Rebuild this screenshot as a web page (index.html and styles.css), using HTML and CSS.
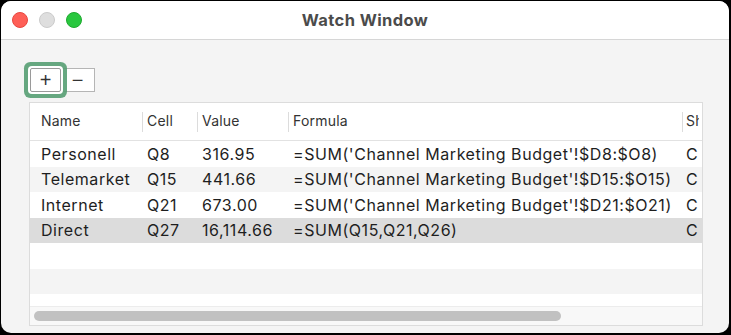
FILE: index.html
```html
<!DOCTYPE html>
<html>
<head>
  <meta charset="utf-8"/>
  <title>Watch Window</title>
  <link rel="stylesheet" href="styles.css">
</head>
<body>
  <div class="window">
    <div class="titlebar">
      <div class="lights">
        <span class="light red"></span>
        <span class="light gray"></span>
        <span class="light green"></span>
      </div>
      <div class="title">Watch Window</div>
    </div>

    <div class="content">
      <div class="tools">
        <button class="tool add focused">+</button>
        <button class="tool remove">&minus;</button>
      </div>

      <!-- watch list -->
      <div class="list">
        <table class="watch">
          <colgroup>
            <col class="c-name"><col class="c-cell"><col class="c-value"><col class="c-formula"><col class="c-sheet">
          </colgroup>
          <thead>
            <tr>
              <th class="first">Name</th>
              <th>Cell</th>
              <th>Value</th>
              <th>Formula</th>
              <th class="sheet"><span class="clip">Sheet</span></th>
            </tr>
          </thead>
          <tbody>
            <tr>
              <td class="first">Personell</td><td>Q8</td><td>316.95</td>
              <td>=SUM('Channel Marketing Budget'!$D8:$O8)</td>
              <td class="sheet"><span class="clip">Channel Marketing Budget</span></td>
            </tr>
            <tr class="alt">
              <td class="first">Telemarket</td><td>Q15</td><td>441.66</td>
              <td>=SUM('Channel Marketing Budget'!$D15:$O15)</td>
              <td class="sheet"><span class="clip">Channel Marketing Budget</span></td>
            </tr>
            <tr>
              <td class="first">Internet</td><td>Q21</td><td>673.00</td>
              <td>=SUM('Channel Marketing Budget'!$D21:$O21)</td>
              <td class="sheet"><span class="clip">Channel Marketing Budget</span></td>
            </tr>
            <tr class="selected">
              <td class="first">Direct</td><td>Q27</td><td>16,114.66</td>
              <td>=SUM(Q15,Q21,Q26)</td>
              <td class="sheet"><span class="clip">Channel Marketing Budget</span></td>
            </tr>
            <tr class="empty"><td colspan="5"></td></tr>
            <tr class="empty alt"><td colspan="5"></td></tr>
          </tbody>
        </table>
        <div class="filler"></div>
        <div class="hscroll">
          <div class="thumb"></div>
        </div>
      </div>
    </div>
  </div>
</body>
</html>
```

FILE: styles.css
```css
html, body {
  margin: 0;
  padding: 0;
  background-color: #000;
}
body {
  width: 731px;
  height: 335px;
  overflow: hidden;
  font-family: "Inter", "Liberation Sans", sans-serif;
}
.window {
  margin: 1px 0 0 1px;
  width: 728px;
  height: 332px;
  background-color: #f4f4f4;
  border-radius: 10px;
  overflow: hidden;
  display: flex;
  flex-direction: column;
}
.titlebar {
  position: relative;
  height: 38px;
  background-color: #fff;
  border-bottom: 1px solid #d6d6d6;
  display: flex;
  align-items: center;
  justify-content: center;
}
.lights {
  position: absolute;
  left: 11px;
  top: 11px;
  display: flex;
  gap: 11px;
}
.light {
  width: 16px;
  height: 16px;
  border-radius: 50%;
  box-sizing: border-box;
}
.red {
  background-color: #fe5f57;
  border: 1px solid #e9473f;
}
.gray {
  background-color: #dedede;
  border: 1px solid #cbcbcb;
}
.green {
  background-color: #29c73f;
  border: 1px solid #1eaa2f;
}
.title {
  font-size: 16.5px;
  font-weight: bold;
  letter-spacing: 0.4px;
  color: #4b4b4b;
}
.content {
  flex: 1;
  padding: 28px 25px 0 28px;
  display: flex;
  flex-direction: column;
}
.tools {
  display: flex;
  height: 24px;
  margin-left: 1px;
}
.tool {
  margin: 0;
  padding: 0;
  height: 24px;
  background-color: #fff;
  border: 1px solid #b5b5b5;
  font-family: "Liberation Sans", sans-serif;
  font-size: 20px;
  line-height: 20px;
  color: #333;
}
.add {
  width: 31px;
}
.remove {
  width: 34px;
  border-left: none;
}
.focused {
  border-color: #9a9a9a;
  box-shadow: 0 0 0 2px #fff, 0 0 0 6px rgba(86, 158, 115, 0.9);
  border-radius: 2px;
  position: relative;
  z-index: 1;
}
.list {
  margin-top: 10px;
  width: 674px;
  height: 224px;
  box-sizing: border-box;
  border: 1px solid #dcdcdc;
  background-color: #fff;
  overflow: hidden;
  display: flex;
  flex-direction: column;
}
.watch {
  border-collapse: collapse;
  table-layout: fixed;
  width: 672px;
  font-size: 16px;
  letter-spacing: 0.55px;
  color: #1e1e1e;
}
.c-name { width: 112px; }
.c-cell { width: 55px; }
.c-value { width: 91px; }
.c-formula { width: 394px; }
.c-sheet { width: 20px; }
.watch th {
  height: 35px;
  padding: 0 0 2px 5px;
  text-align: left;
  font-weight: normal;
  font-size: 14px;
  letter-spacing: 0.2px;
  color: #333;
  border-bottom: 1px solid #e2e2e2;
  white-space: nowrap;
  overflow: hidden;
  background-image: linear-gradient(#dcdcdc, #dcdcdc);
  background-size: 1px 20px;
  background-position: 0 center;
  background-repeat: no-repeat;
}
.watch td {
  height: 25.5px;
  padding: 0 0 0 5px;
  white-space: nowrap;
  overflow: hidden;
}
.watch th.first, .watch td.first {
  padding-left: 11px;
  background-image: none;
}
.watch th.sheet, .watch td.sheet {
  padding-left: 4px;
}
.clip {
  display: block;
  width: 12px;
  overflow: hidden;
}
.watch th .clip {
  width: 13px;
}
.watch tr.alt td {
  background-color: #f4f4f4;
}
.watch tr.selected td {
  background-color: #dcdcdc;
}
.filler {
  flex: 1;
}
.hscroll {
  height: 19px;
  border-top: 1px solid #ececec;
  background-color: #f8f8f8;
  padding: 4px 0 0 4px;
  box-sizing: border-box;
}
.thumb {
  width: 527px;
  height: 10px;
  border-radius: 5px;
  background-color: #c1c1c1;
}
```
